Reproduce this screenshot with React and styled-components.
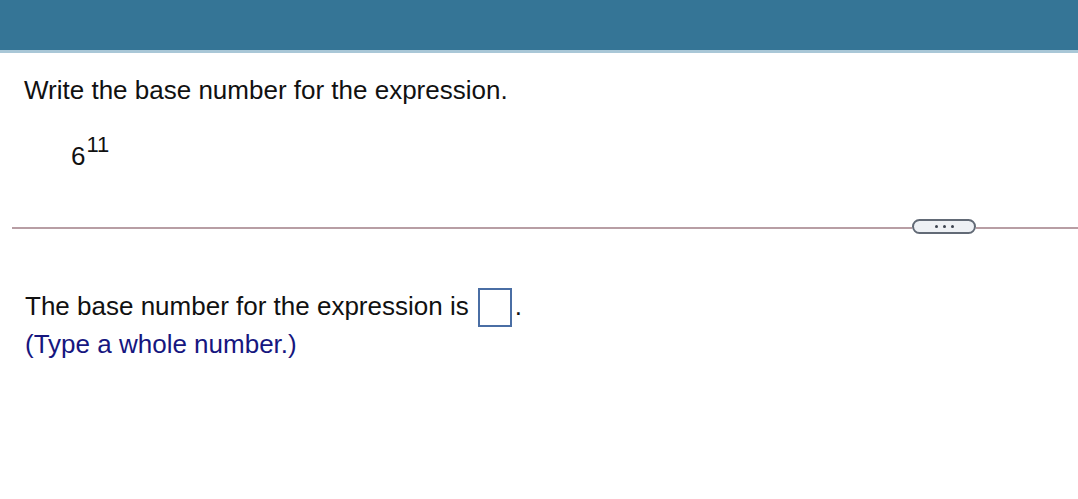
import styled, { createGlobalStyle } from "styled-components"

const Global = createGlobalStyle`
  body {
    margin: 0;
    background: #fff;
    font-family: "Liberation Sans", Arial, sans-serif;
  }
`

const Page = styled.div`
  width: 1078px;
  height: 499px;
  overflow: hidden;
`

const TopBar = styled.div`
  height: 50px;
  background: #357596;
  border-bottom: 3px solid #a9c7d7;
`

const Question = styled.section`
  padding: 0 24px;
`

const Prompt = styled.p`
  margin: 0;
  padding-top: 22px;
  font-size: 26px;
  line-height: 30px;
  color: #111;
`

const Expression = styled.div`
  margin: 28px 0 0 47px;
  font-size: 26px;
  line-height: 30px;
  color: #111;

  sup {
    font-size: 22px;
    position: relative;
    top: -3px;
    margin-left: 1px;
  }
`

const Divider = styled.div`
  display: flex;
  align-items: center;
  margin: 48px 0 0 12px;
`

const Rule = styled.div`
  height: 2px;
  margin-top: 3px;
  background: #b89ea4;
  flex: ${(p) => (p.$grow ? 1 : "none")};
  width: ${(p) => (p.$grow ? "auto" : "900px")};
`

const MoreButton = styled.button`
  width: 64px;
  height: 15px;
  padding: 0;
  border: 2px solid #626a76;
  border-radius: 8px;
  background: #eef1f5;
  display: flex;
  align-items: center;
  justify-content: center;
  gap: 5px;
`

const Dot = styled.span`
  width: 3px;
  height: 3px;
  border-radius: 50%;
  background: #3d4450;
`

const Answer = styled.section`
  padding: 52px 24px 0 25px;
`

const AnswerLine = styled.div`
  display: flex;
  align-items: center;
  font-size: 26px;
  color: #111;
`

const AnswerBox = styled.span`
  display: inline-block;
  width: 30px;
  height: 35px;
  margin: 2px 3px 0 9px;
  border: 2px solid #4a6ea4;
  background: #fff;
`

const Hint = styled.div`
  margin-top: 2px;
  font-size: 26px;
  line-height: 30px;
  color: #16167f;
`

export default function App() {
  return (
    <Page>
      <Global />
      <TopBar />
      <Question>
        <Prompt>Write the base number for the expression.</Prompt>
        <Expression>
          6<sup>11</sup>
        </Expression>
      </Question>
      <Divider>
        <Rule />
        <MoreButton aria-label="more">
          <Dot />
          <Dot />
          <Dot />
        </MoreButton>
        <Rule $grow />
      </Divider>
      <Answer>
        <AnswerLine>
          The base number for the expression is
          <AnswerBox />.
        </AnswerLine>
        <Hint>(Type a whole number.)</Hint>
      </Answer>
    </Page>
  )
}
